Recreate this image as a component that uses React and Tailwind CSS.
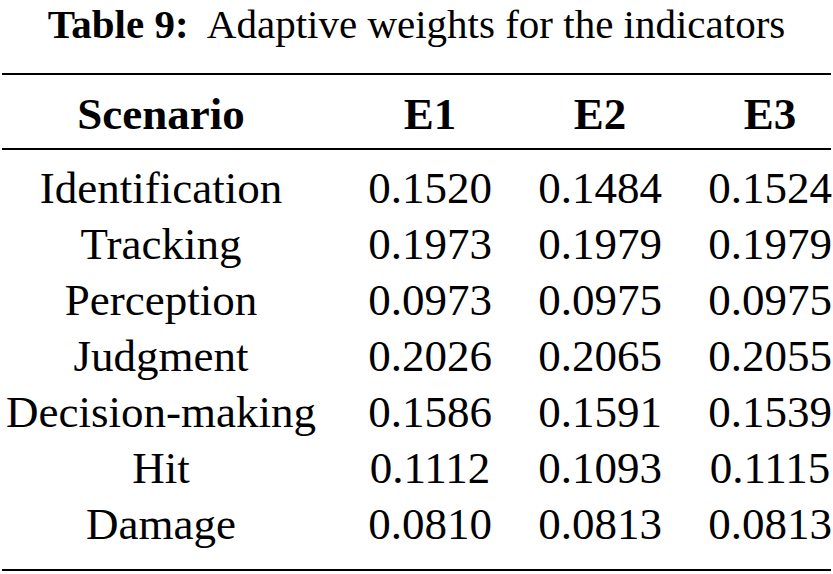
export default function App() {
  const rows = [
    ['Identification', '0.1520', '0.1484', '0.1524'],
    ['Tracking', '0.1973', '0.1979', '0.1979'],
    ['Perception', '0.0973', '0.0975', '0.0975'],
    ['Judgment', '0.2026', '0.2065', '0.2055'],
    ['Decision-making', '0.1586', '0.1591', '0.1539'],
    ['Hit', '0.1112', '0.1093', '0.1115'],
    ['Damage', '0.0810', '0.0813', '0.0813'],
  ];

  return (
    <div
      className="w-[833px] h-[574px] bg-white text-black overflow-hidden"
      style={{ fontFamily: '"Liberation Serif", "Times New Roman", serif' }}
    >
      {/* Caption */}
      <div className="text-center text-[41px] leading-[48px] whitespace-pre">
        <span className="font-bold">Table 9:</span>
        <span>{'  '}Adaptive weights for the indicators</span>
      </div>

      <div className="mt-[25px] mx-[2px] h-[2px] bg-black" />

      {/* Header */}
      <div className="mt-[11px] grid grid-cols-[322px_124px_124px_124px] gap-x-[46px] text-[45px] leading-[56px] font-bold text-center">
        <div>Scenario</div>
        <div>E1</div>
        <div>E2</div>
        <div>E3</div>
      </div>

      <div className="mt-[6px] mx-[2px] h-[2px] bg-black" />

      {/* Body */}
      <div className="mt-[10px]">
        {rows.map((r) => (
          <div
            key={r[0]}
            className="grid grid-cols-[322px_124px_124px_124px] gap-x-[46px] text-[45px] leading-[56px] text-center"
          >
            {r.map((c, i) => (
              <div key={i}>{c}</div>
            ))}
          </div>
        ))}
      </div>

      <div className="mt-[17px] mx-[2px] h-[2px] bg-black" />
    </div>
  );
}
